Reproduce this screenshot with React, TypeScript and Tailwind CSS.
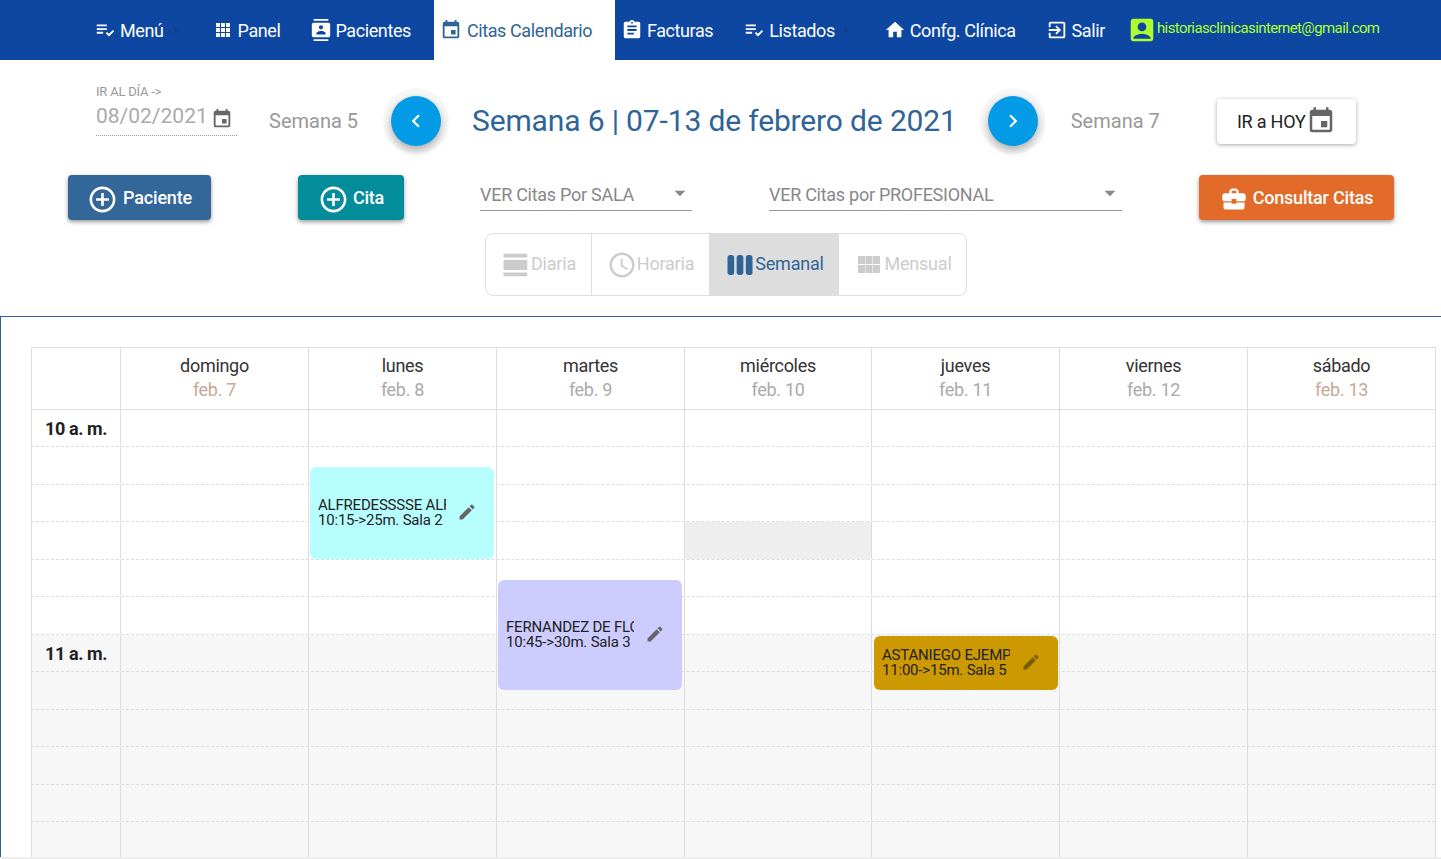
import React from "react";
import {
  MdPlaylistAddCheck, MdContacts, MdEvent, MdAssignment, MdHome, MdExitToApp, MdAccountBox,
  MdAddCircleOutline, MdBusinessCenter, MdViewDay, MdAccessTime, MdViewWeek, MdEdit,
  MdChevronLeft, MdChevronRight, MdArrowDropDown,
} from "react-icons/md";

const days = [
  { name: "domingo", date: "feb. 7", weekend: true },
  { name: "lunes", date: "feb. 8" },
  { name: "martes", date: "feb. 9" },
  { name: "miércoles", date: "feb. 10" },
  { name: "jueves", date: "feb. 11" },
  { name: "viernes", date: "feb. 12" },
  { name: "sábado", date: "feb. 13", weekend: true },
];

const rowHeights = [37, 38, 37, 38, 37, 38, 37, 38, 37, 38, 37, 38];

function PanelIcon() {
  return (
    <svg width="14" height="14" viewBox="0 0 14 14" fill="currentColor" className="mr-[8px]">
      <path d="M0 0h4v4H0zM5 0h4v4H5zM10 0h4v4h-4zM0 5h4v4H0zM5 5h4v4H5zM10 5h4v4h-4zM0 10h4v4H0zM5 10h4v4H5zM10 10h4v4h-4z" />
    </svg>
  );
}

function MonthIcon() {
  return (
    <svg width="22" height="17" viewBox="0 0 22 17" fill="currentColor" className="mr-[4px]">
      <path d="M0 0h7v8H0zM7.5 0h7v8h-7zM15 0h7v8h-7zM0 9h7v8H0zM7.5 9h7v8h-7zM15 9h7v8h-7z" />
    </svg>
  );
}

function NavBar() {
  return (
    <nav className="flex h-[60px] items-center bg-[#0d47a1] pl-[94px] text-[18px] tracking-[-0.4px] text-white">
      <a className="flex items-center">
        <MdPlaylistAddCheck size={22} className="mr-[4px]" />
        Menú
        <MdChevronRight size={14} className="ml-[4px] text-[#1c3a6e]" />
      </a>
      <a className="ml-[34px] flex items-center">
        <PanelIcon />
        Panel
      </a>
      <a className="ml-[30px] flex items-center">
        <MdContacts size={22} className="mr-[3px]" />
        Pacientes
      </a>
      <a className="ml-[23px] flex h-[60px] w-[181px] items-center bg-white pl-[6px] text-[#2f6496]">
        <MdEvent size={22} className="mr-[5px]" />
        Citas Calendario
      </a>
      <a className="ml-[6px] flex items-center">
        <MdAssignment size={22} className="mr-[4px]" />
        Facturas
      </a>
      <a className="ml-[30px] flex items-center">
        <MdPlaylistAddCheck size={22} className="mr-[4px]" />
        Listados
        <MdChevronRight size={14} className="ml-[4px] text-[#1c3a6e]" />
      </a>
      <a className="ml-[31px] flex items-center">
        <MdHome size={22} className="mr-[4px]" />
        Confg. Clínica
      </a>
      <a className="ml-[30px] flex items-center">
        <MdExitToApp size={22} className="mr-[4px]" />
        Salir
      </a>
      <a className="ml-[22px] flex items-center text-[15px] tracking-[-0.6px] text-[#aeff2e]">
        <MdAccountBox size={30} />
        <span className="-mt-[3px]">historiasclinicasinternet@gmail.com</span>
      </a>
    </nav>
  );
}

function WeekControls() {
  return (
    <div className="flex h-[96px] items-center pl-[96px] pt-[25px]">
      <div className="w-[141px] self-start">
        <div className="text-[13px] leading-[14px] tracking-[-0.2px] text-[#999]">IR AL DÍA -&gt;</div>
        <div className="flex h-[37px] items-center border-b border-dotted border-[#999] text-[21px] text-[#aaa]">
          08/02/2021
          <MdEvent size={22} className="ml-[3px] mt-[3px] text-[#666]" />
        </div>
      </div>
      <span className="ml-[32px] text-[20px] text-[#999]">Semana 5</span>
      <button className="ml-[33px] flex h-[50px] w-[50px] items-center justify-center rounded-full bg-[#039be5] text-white shadow-[0_4px_8px_rgba(0,0,0,0.3),0_0_0_8px_rgba(0,0,0,0.03)]">
        <MdChevronLeft size={26} />
      </button>
      <h1 className="ml-[31px] text-[30px] font-normal tracking-[-0.15px] text-[#2f6496]">Semana 6 | 07-13 de febrero de 2021</h1>
      <button className="ml-[31px] flex h-[50px] w-[50px] items-center justify-center rounded-full bg-[#039be5] text-white shadow-[0_4px_8px_rgba(0,0,0,0.3),0_0_0_8px_rgba(0,0,0,0.03)]">
        <MdChevronRight size={26} />
      </button>
      <span className="ml-[33px] text-[20px] text-[#999]">Semana 7</span>
      <button className="ml-[57px] mt-[1px] flex h-[45px] w-[139px] items-center justify-center rounded-[4px] bg-white text-[18px] tracking-[-0.2px] text-[#222] shadow-[0_1px_4px_rgba(0,0,0,0.35)]">
        IR a HOY
        <MdEvent size={30} className="text-[#666]" />
      </button>
    </div>
  );
}

function FilterSelect({ label, width, gap }: { label: string; width: string; gap: string }) {
  return (
    <div className={`flex h-[36px] items-center justify-between border-b border-[#999] pt-[3px] text-[18px] tracking-[-0.27px] text-[#888] ${width} ${gap}`}>
      <span>{label}</span>
      <MdArrowDropDown size={26} className="mr-[-1px] -mt-[3px] text-[#888]" />
    </div>
  );
}

function ActionsRow() {
  return (
    <div className="mt-[19px] flex items-start pl-[68px]">
      <button className="flex h-[45px] w-[143px] items-center justify-center gap-[5px] rounded-[4px] bg-[#336699] text-[18px] font-medium tracking-[-0.2px] text-white shadow-[0_2px_4px_rgba(0,0,0,0.4)]">
        <MdAddCircleOutline size={31} className="mt-[3px]" />
        <span className="-mt-[1px]">Paciente</span>
      </button>
      <button className="ml-[87px] flex h-[45px] w-[106px] items-center justify-center gap-[4px] rounded-[4px] bg-[#038c99] text-[18px] font-medium tracking-[-0.2px] text-white shadow-[0_2px_4px_rgba(0,0,0,0.4)]">
        <MdAddCircleOutline size={31} className="mt-[3px]" />
        <span className="-mt-[1px]">Cita</span>
      </button>
      <FilterSelect label="VER Citas Por SALA" width="w-[212px]" gap="ml-[76px]" />
      <FilterSelect label="VER Citas por PROFESIONAL" width="w-[353px]" gap="ml-[77px]" />
      <button className="ml-[77px] flex h-[45px] w-[195px] items-center justify-center gap-[5px] rounded-[4px] bg-[#e26b29] text-[18px] font-medium tracking-[-0.2px] text-white shadow-[0_2px_4px_rgba(0,0,0,0.4)]">
        <MdBusinessCenter size={28} className="mt-[2px]" />
        <span className="-mt-[1px]">Consultar Citas</span>
      </button>
    </div>
  );
}

function ViewTabs() {
  return (
    <div className="mt-[13px] flex justify-center pl-[11px]">
      <div className="flex h-[63px] w-[482px] overflow-hidden rounded-[8px] border border-[#ddd] text-[18px] tracking-[-0.2px] text-[#ccc]">
        <div className="flex w-[106px] items-center justify-center border-r border-[#ddd]">
          <MdViewDay size={30} />
          <span className="-mt-[3px]">Diaria</span>
        </div>
        <div className="flex w-[118px] items-center justify-center border-r border-[#ddd]">
          <MdAccessTime size={30} />
          <span className="-mt-[3px]">Horaria</span>
        </div>
        <div className="flex w-[129px] items-center justify-center bg-[#ddd] text-[#2f6496]">
          <MdViewWeek size={30} />
          <span className="-mt-[3px]">Semanal</span>
        </div>
        <div className="flex flex-1 items-center justify-center pl-[5px]">
          <MonthIcon />
          <span className="-mt-[3px]">Mensual</span>
        </div>
      </div>
    </div>
  );
}

function EventCard({ pos, bg, name, time, dark }: { pos: string; bg: string; name: string; time: string; dark?: boolean }) {
  return (
    <div className={`absolute flex w-[184px] items-center rounded-[6px] pl-[8px] ${pos} ${bg}`}>
      <div className="w-[128px] overflow-hidden whitespace-nowrap text-[15px] leading-[15px] tracking-[-0.2px] text-[#222]">
        <div>{name}</div>
        <div>{time}</div>
      </div>
      <MdEdit size={20} className={`ml-[11px] -mt-[3px] ${dark ? "text-[#7a5c00]" : "text-[#666]"}`} />
    </div>
  );
}

function Calendar() {
  return (
    <section className="h-[541px] overflow-hidden border-t border-l border-[#2f6496] bg-white pl-[30px] pt-[30px]">
      <div className="relative w-[1405px] border-t border-r border-[#ddd]">
        <div className="grid h-[62px] grid-cols-[89px_188px_188px_188px_187px_188px_188px_188px] border-b border-[#ddd]">
          <div className="border-l border-[#ddd]" />
          {days.map((d) => (
            <div key={d.name} className="border-l border-[#ddd] pt-[6px] text-center text-[18px] leading-[24px] tracking-[-0.3px] text-[#333]">
              <div>{d.name}</div>
              <div className={d.weekend ? "text-[#c8a896]" : "text-[#aaa]"}>{d.date}</div>
            </div>
          ))}
        </div>
        {rowHeights.map((h, i) => (
          <div
            key={i}
            style={{ height: h }}
            className={`grid grid-cols-[89px_188px_188px_188px_187px_188px_188px_188px] border-b border-dashed border-[#ddd] ${i >= 6 ? "bg-[#f7f7f7]" : ""}`}
          >
            <div className="border-l border-[#ddd] pt-[6px] pl-[13px] text-[18px] font-bold leading-[25px] tracking-[-0.4px] text-[#222]">
              {i === 0 ? "10 a. m." : i === 6 ? "11 a. m." : ""}
            </div>
            {days.map((d, j) => (
              <div key={d.name} className={`border-l border-[#ddd] ${i === 3 && j === 3 ? "bg-[#eee]" : ""}`} />
            ))}
          </div>
        ))}
        <EventCard pos="left-[279px] top-[119px] h-[92px]" bg="bg-[#b7ffff]" name="ALFREDESSSSE ALFONSO" time="10:15->25m. Sala 2" />
        <EventCard pos="left-[467px] top-[232px] h-[110px]" bg="bg-[#ccccff]" name="FERNANDEZ DE FLORES" time="10:45->30m. Sala 3" />
        <EventCard pos="left-[843px] top-[288px] h-[54px]" bg="bg-[#cc9900]" name="ASTANIEGO EJEMPLO" time="11:00->15m. Sala 5" dark />
      </div>
    </section>
  );
}

export default function App() {
  return (
    <div className="h-screen overflow-hidden bg-[#eee] font-['Roboto',sans-serif]">
      <div className="bg-white">
        <NavBar />
        <WeekControls />
        <ActionsRow />
        <ViewTabs />
        <div className="h-[20px]" />
      </div>
      <Calendar />
    </div>
  );
}
